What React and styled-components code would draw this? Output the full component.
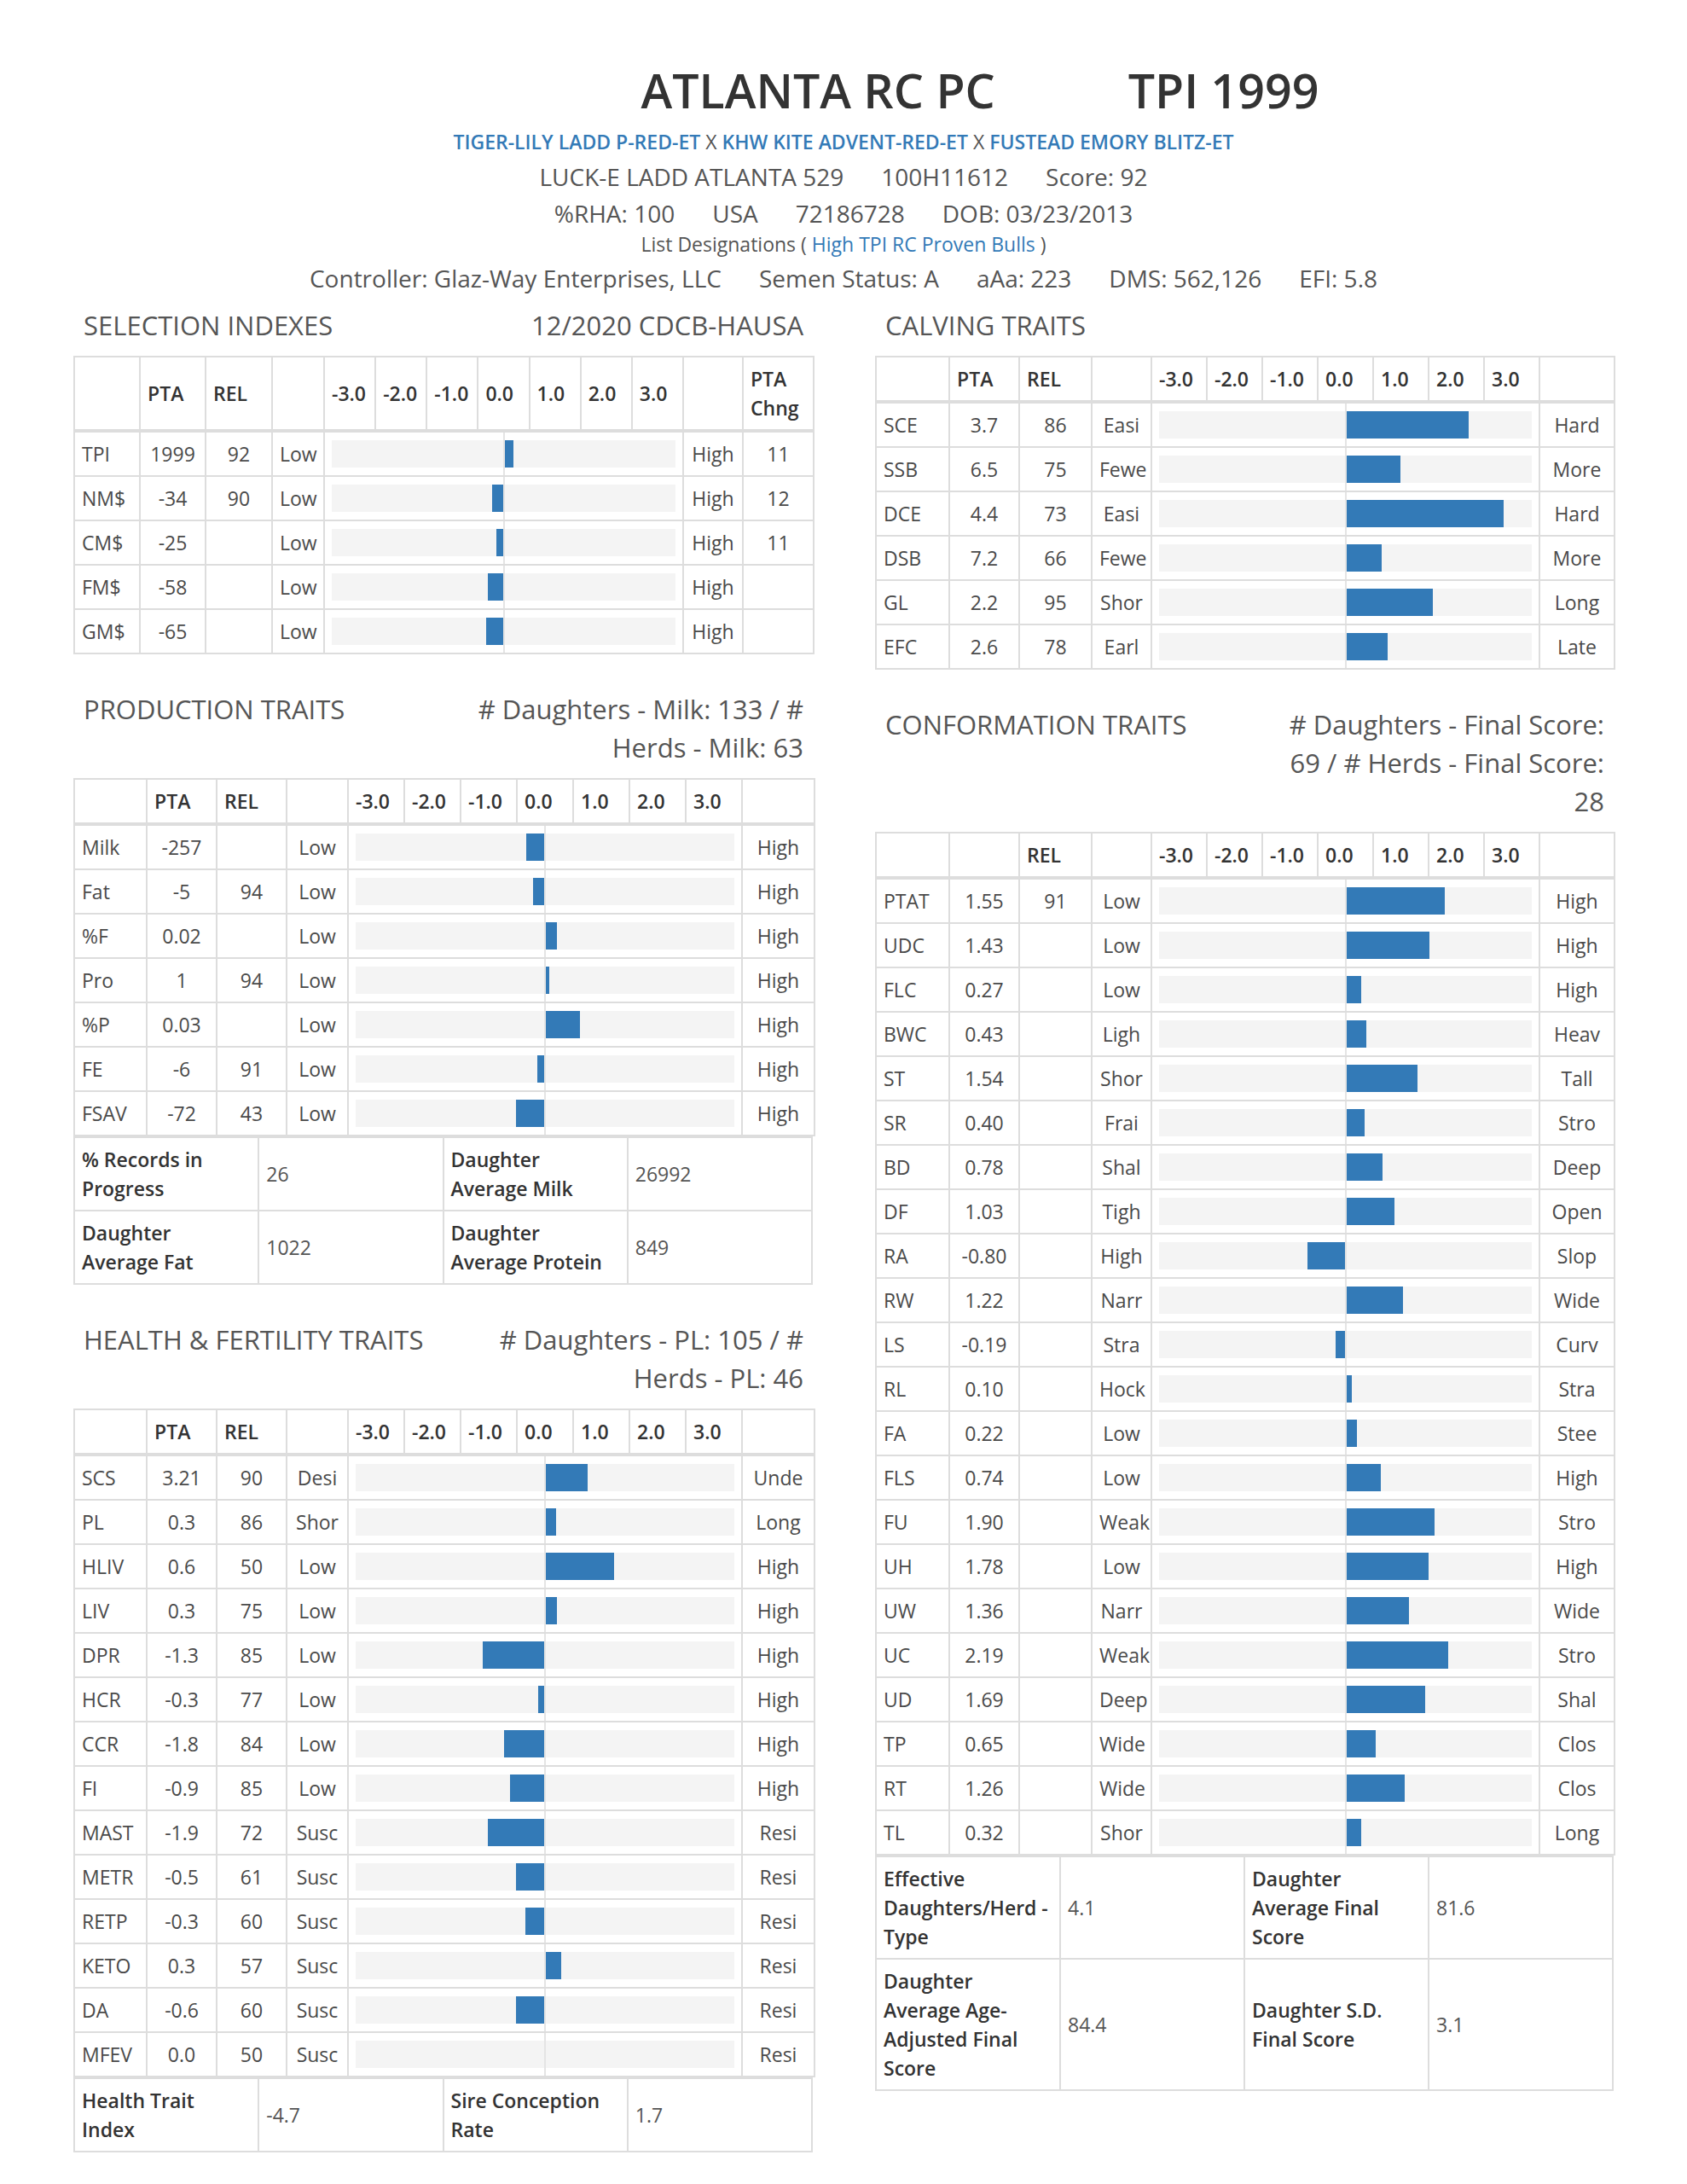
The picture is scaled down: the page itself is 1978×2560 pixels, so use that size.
import styled, { createGlobalStyle } from 'styled-components';

const GlobalStyle = createGlobalStyle`
  body {
    margin: 0;
    background: #fff;
    font-family: "Open Sans", "Liberation Sans", sans-serif;
    color: #333;
  }
`;

const Page = styled.div`
  width: 1806px;
  margin: 0 auto;
  padding: 66px 0 80px;
`;

const Header = styled.header`
  text-align: center;
  color: #555;
`;

const Title = styled.h1`
  margin: 0;
  padding-left: 320px;
  font-size: 55.5px;
  line-height: 80px;
  font-weight: 600;
  color: #333;
`;

const TitleScore = styled.span`
  margin-left: 156px;
`;

const Pedigree = styled.div`
  margin-top: 2px;
  font-size: 23px;
  line-height: 36px;
  color: #555;
`;

const PedLink = styled.span`
  color: #337ab7;
  font-weight: 600;
`;

const InfoLine = styled.div`
  font-size: 28px;
  line-height: 42px;
  margin-top: ${(p) => p.$top || 0}px;
`;

const InfoItem = styled.span`
  & + & {
    margin-left: ${(p) => p.$gap || 36}px;
  }
`;

const ListLine = styled.div`
  font-size: 23px;
  line-height: 30px;
`;

const ListLink = styled.span`
  color: #337ab7;
`;

const Columns = styled.div`
  display: grid;
  grid-template-columns: 867px 866px;
  column-gap: 73px;
  margin-top: 12px;
`;

const Column = styled.div`
  display: flex;
  flex-direction: column;
`;

const Section = styled.section`
  margin-top: ${(p) => (p.$first ? 0 : 42)}px;
`;

const SectionHead = styled.div`
  display: flex;
  justify-content: space-between;
  align-items: flex-start;
  padding: 0 11px 0 12px;
  margin-bottom: 13px;
  font-size: 31px;
  line-height: 45px;
  color: #555;
`;

const SectionTitle = styled.h4`
  margin: 0;
  font-size: 31px;
  line-height: 45px;
  font-weight: 400;
  white-space: nowrap;
`;

const SectionNote = styled.div`
  max-width: 395px;
  text-align: right;
`;

const Grid = styled.table`
  width: 100%;
  border-collapse: collapse;
  table-layout: fixed;
  font-size: 23px;
  line-height: 34px;
  color: #4a4a4a;
  border: 2px solid #ddd;
`;

const Col = styled.col`
  width: ${(p) => p.$w}px;
`;

const HeadCell = styled.th`
  border: 2px solid #ddd;
  border-bottom-width: 4px;
  padding: 8px;
  text-align: left;
  vertical-align: middle;
  font-weight: 600;
  color: #333;
`;

const Cell = styled.td`
  border: 2px solid #ddd;
  padding: 8px;
  text-align: ${(p) => (p.$left ? 'left' : 'center')};
  vertical-align: middle;
  white-space: nowrap;
`;

const ChartCell = styled.td`
  border: 2px solid #ddd;
  padding: 0 8px;
`;

const Track = styled.div`
  display: flex;
  align-items: center;
  height: 50px;
`;

const Rail = styled.div`
  flex: 1;
  height: 32px;
  display: flex;
  justify-content: ${(p) => (p.$neg ? 'flex-end' : 'flex-start')};
  background: #f4f4f4;
`;

const Axis = styled.div`
  width: 2px;
  align-self: stretch;
  background: #e4e4e4;
`;

const Fill = styled.div`
  height: 100%;
  background: #337ab7;
`;

const FactTable = styled.table`
  width: 100%;
  border-collapse: collapse;
  table-layout: fixed;
  font-size: 23px;
  line-height: 34px;
  border: 2px solid #ddd;
`;

const FactLabel = styled.td`
  border: 2px solid #ddd;
  padding: 8px;
  vertical-align: middle;
  font-weight: 600;
  color: #333;
`;

const FactValue = styled.td`
  border: 2px solid #ddd;
  padding: 8px;
  vertical-align: middle;
  color: #555;
`;

const SCALE = ['-3.0', '-2.0', '-1.0', '0.0', '1.0', '2.0', '3.0'];

function Bar({ f }) {
  const w = `${Math.abs(f) * 100}%`;
  return (
    <Track>
      <Rail $neg>{f < 0 && <Fill style={{ width: w }} />}</Rail>
      <Axis />
      <Rail>{f > 0 && <Fill style={{ width: w }} />}</Rail>
    </Track>
  );
}

function TraitTable({ widths, ptaHead = 'PTA', rows, chng }) {
  const step = widths[4] / 7;
  return (
    <Grid>
      <colgroup>
        <Col $w={widths[0]} />
        <Col $w={widths[1]} />
        <Col $w={widths[2]} />
        <Col $w={widths[3]} />
        {SCALE.map((s) => (
          <Col key={s} $w={step} />
        ))}
        <Col $w={widths[5]} />
        {chng && <Col $w={widths[6]} />}
      </colgroup>
      <thead>
        <tr>
          <HeadCell />
          <HeadCell>{ptaHead}</HeadCell>
          <HeadCell>REL</HeadCell>
          <HeadCell />
          {SCALE.map((s) => (
            <HeadCell key={s}>{s}</HeadCell>
          ))}
          <HeadCell />
          {chng && <HeadCell>PTA Chng</HeadCell>}
        </tr>
      </thead>
      <tbody>
        {rows.map(([name, pta, rel, low, high, f, ch]) => (
          <tr key={name}>
            <Cell $left>{name}</Cell>
            <Cell>{pta}</Cell>
            <Cell>{rel}</Cell>
            <Cell>{low}</Cell>
            <ChartCell colSpan={7}>
              <Bar f={f} />
            </ChartCell>
            <Cell>{high}</Cell>
            {chng && <Cell>{ch}</Cell>}
          </tr>
        ))}
      </tbody>
    </Grid>
  );
}

function Facts({ rows }) {
  return (
    <FactTable>
      <tbody>
        {rows.map((r) => (
          <tr key={r[0]}>
            <FactLabel>{r[0]}</FactLabel>
            <FactValue>{r[1]}</FactValue>
            <FactLabel>{r[2]}</FactLabel>
            <FactValue>{r[3]}</FactValue>
          </tr>
        ))}
      </tbody>
    </FactTable>
  );
}

const selection = [
  ['TPI', '1999', '92', 'Low', 'High', 0.052, '11'],
  ['NM$', '-34', '90', 'Low', 'High', -0.06, '12'],
  ['CM$', '-25', '', 'Low', 'High', -0.036, '11'],
  ['FM$', '-58', '', 'Low', 'High', -0.088, ''],
  ['GM$', '-65', '', 'Low', 'High', -0.097, ''],
];

const production = [
  ['Milk', '-257', '', 'Low', 'High', -0.095],
  ['Fat', '-5', '94', 'Low', 'High', -0.058],
  ['%F', '0.02', '', 'Low', 'High', 0.057],
  ['Pro', '1', '94', 'Low', 'High', 0.02],
  ['%P', '0.03', '', 'Low', 'High', 0.18],
  ['FE', '-6', '91', 'Low', 'High', -0.036],
  ['FSAV', '-72', '43', 'Low', 'High', -0.15],
];

const health = [
  ['SCS', '3.21', '90', 'Desi', 'Unde', 0.22],
  ['PL', '0.3', '86', 'Shor', 'Long', 0.056],
  ['HLIV', '0.6', '50', 'Low', 'High', 0.364],
  ['LIV', '0.3', '75', 'Low', 'High', 0.06],
  ['DPR', '-1.3', '85', 'Low', 'High', -0.326],
  ['HCR', '-0.3', '77', 'Low', 'High', -0.03],
  ['CCR', '-1.8', '84', 'Low', 'High', -0.215],
  ['FI', '-0.9', '85', 'Low', 'High', -0.18],
  ['MAST', '-1.9', '72', 'Susc', 'Resi', -0.298],
  ['METR', '-0.5', '61', 'Susc', 'Resi', -0.15],
  ['RETP', '-0.3', '60', 'Susc', 'Resi', -0.1],
  ['KETO', '0.3', '57', 'Susc', 'Resi', 0.08],
  ['DA', '-0.6', '60', 'Susc', 'Resi', -0.15],
  ['MFEV', '0.0', '50', 'Susc', 'Resi', 0],
];

const calving = [
  ['SCE', '3.7', '86', 'Easi', 'Hard', 0.66],
  ['SSB', '6.5', '75', 'Fewe', 'More', 0.29],
  ['DCE', '4.4', '73', 'Easi', 'Hard', 0.85],
  ['DSB', '7.2', '66', 'Fewe', 'More', 0.19],
  ['GL', '2.2', '95', 'Shor', 'Long', 0.465],
  ['EFC', '2.6', '78', 'Earl', 'Late', 0.225],
];

const conformation = [
  ['PTAT', '1.55', '91', 'Low', 'High', 0.53],
  ['UDC', '1.43', '', 'Low', 'High', 0.447],
  ['FLC', '0.27', '', 'Low', 'High', 0.08],
  ['BWC', '0.43', '', 'Ligh', 'Heav', 0.106],
  ['ST', '1.54', '', 'Shor', 'Tall', 0.384],
  ['SR', '0.40', '', 'Frai', 'Stro', 0.1],
  ['BD', '0.78', '', 'Shal', 'Deep', 0.194],
  ['DF', '1.03', '', 'Tigh', 'Open', 0.258],
  ['RA', '-0.80', '', 'High', 'Slop', -0.2],
  ['RW', '1.22', '', 'Narr', 'Wide', 0.306],
  ['LS', '-0.19', '', 'Stra', 'Curv', -0.048],
  ['RL', '0.10', '', 'Hock', 'Stra', 0.028],
  ['FA', '0.22', '', 'Low', 'Stee', 0.056],
  ['FLS', '0.74', '', 'Low', 'High', 0.187],
  ['FU', '1.90', '', 'Weak', 'Stro', 0.475],
  ['UH', '1.78', '', 'Low', 'High', 0.444],
  ['UW', '1.36', '', 'Narr', 'Wide', 0.34],
  ['UC', '2.19', '', 'Weak', 'Stro', 0.548],
  ['UD', '1.69', '', 'Deep', 'Shal', 0.424],
  ['TP', '0.65', '', 'Wide', 'Clos', 0.16],
  ['RT', '1.26', '', 'Wide', 'Clos', 0.316],
  ['TL', '0.32', '', 'Shor', 'Long', 0.08],
];

const LEFT_W = [85, 82, 82, 72, 462, 85];
const RIGHT_W = [86, 82, 85, 70, 455, 88];

export default function App() {
  return (
    <Page>
      <GlobalStyle />
      <Header>
        <Title>
          ATLANTA RC PC<TitleScore>TPI 1999</TitleScore>
        </Title>
        <Pedigree>
          <PedLink>TIGER-LILY LADD P-RED-ET</PedLink> X <PedLink>KHW KITE ADVENT-RED-ET</PedLink> X{' '}
          <PedLink>FUSTEAD EMORY BLITZ-ET</PedLink>
        </Pedigree>
        <InfoLine $top={2}>
          <InfoItem>LUCK-E LADD ATLANTA 529</InfoItem>
          <InfoItem>100H11612</InfoItem>
          <InfoItem>Score: 92</InfoItem>
        </InfoLine>
        <InfoLine $top={1}>
          <InfoItem>%RHA: 100</InfoItem>
          <InfoItem>USA</InfoItem>
          <InfoItem>72186728</InfoItem>
          <InfoItem>DOB: 03/23/2013</InfoItem>
        </InfoLine>
        <ListLine>
          List Designations ( <ListLink>High TPI RC Proven Bulls</ListLink> )
        </ListLine>
        <InfoLine $top={4}>
          <InfoItem>Controller: Glaz-Way Enterprises, LLC</InfoItem>
          <InfoItem $gap={44}>Semen Status: A</InfoItem>
          <InfoItem $gap={44}>aAa: 223</InfoItem>
          <InfoItem $gap={44}>DMS: 562,126</InfoItem>
          <InfoItem $gap={44}>EFI: 5.8</InfoItem>
        </InfoLine>
      </Header>

      <Columns>
        <Column>
          <Section $first>
            <SectionHead>
              <SectionTitle>SELECTION INDEXES</SectionTitle>
              <SectionNote>12/2020 CDCB-HAUSA</SectionNote>
            </SectionHead>
            <TraitTable widths={[77, 77, 78, 61, 421, 70, 83]} rows={selection} chng />
          </Section>

          <Section>
            <SectionHead>
              <SectionTitle>PRODUCTION TRAITS</SectionTitle>
              <SectionNote># Daughters - Milk: 133 / # Herds - Milk: 63</SectionNote>
            </SectionHead>
            <TraitTable widths={LEFT_W} rows={production} />
            <Facts
              rows={[
                ['% Records in Progress', '26', 'Daughter Average Milk', '26992'],
                ['Daughter Average Fat', '1022', 'Daughter Average Protein', '849'],
              ]}
            />
          </Section>

          <Section>
            <SectionHead>
              <SectionTitle>HEALTH &amp; FERTILITY TRAITS</SectionTitle>
              <SectionNote># Daughters - PL: 105 / # Herds - PL: 46</SectionNote>
            </SectionHead>
            <TraitTable widths={LEFT_W} rows={health} />
            <Facts rows={[['Health Trait Index', '-4.7', 'Sire Conception Rate', '1.7']]} />
          </Section>
        </Column>

        <Column>
          <Section $first>
            <SectionHead>
              <SectionTitle>CALVING TRAITS</SectionTitle>
            </SectionHead>
            <TraitTable widths={RIGHT_W} rows={calving} />
          </Section>

          <Section>
            <SectionHead>
              <SectionTitle>CONFORMATION TRAITS</SectionTitle>
              <SectionNote># Daughters - Final Score: 69 / # Herds - Final Score: 28</SectionNote>
            </SectionHead>
            <TraitTable widths={RIGHT_W} ptaHead="" rows={conformation} />
            <Facts
              rows={[
                ['Effective Daughters/Herd - Type', '4.1', 'Daughter Average Final Score', '81.6'],
                ['Daughter Average Age-Adjusted Final Score', '84.4', 'Daughter S.D. Final Score', '3.1'],
              ]}
            />
          </Section>
        </Column>
      </Columns>
    </Page>
  );
}
